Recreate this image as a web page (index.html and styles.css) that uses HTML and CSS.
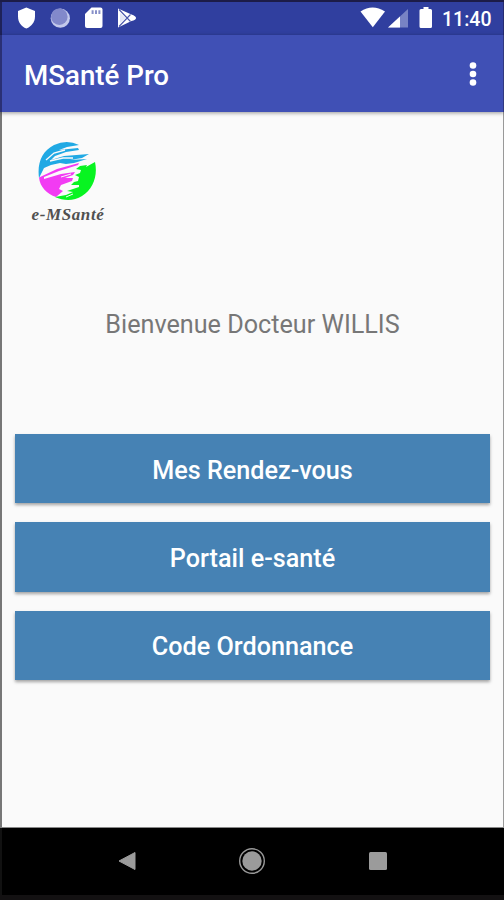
FILE: index.html
```html
<!DOCTYPE html>
<html lang="fr">
<head>
<meta charset="utf-8">
<title>MSanté Pro</title>
<link rel="stylesheet" href="styles.css">
</head>
<body>
<div class="phone">
  <header class="status">
    <svg class="status-left" width="115" height="34" viewBox="0 0 115 34">
      <path fill="#fff" d="M26.300 7.500 35 11V16.500C35 22 31.500 26.500 26.300 28.500C21 26.500 18 22 18 16.500V11Z"/>
      <circle cx="60.300" cy="18.200" r="9.600" fill="#c3c9ec"/>
      <circle cx="59.300" cy="16.700" r="8.300" fill="#8289cb"/>
      <path fill="#fff" d="M91.500 7.500H100.500Q102.500 7.500 102.500 9.500V26Q102.500 28 100.500 28H87Q85 28 85 26V14Z"/>
      <path stroke="#8790c9" stroke-width="2" d="M92.600 10.300V14M96 10.300V14M99.400 10.300V14"/>
    </svg>
    <svg class="play" width="20" height="20" viewBox="0 0 20 20">
      <path fill="#fff" d="M1 .5 14.500 6.500Q19 8 19 10Q19 12 14.500 13L1 19.500Z"/>
      <path fill="none" stroke="#4a57ac" stroke-width="1.100" d="M2 1.500 13.500 13.500M2 18.500 13.500 6.500"/>
      <path fill="#e4e7f6" d="M3 5 8.500 10 3 15Z"/>
    </svg>
    <svg class="status-right" width="80" height="34" viewBox="0 0 80 34">
      <path fill="#fff" d="M.5 11.500Q12.500 3.500 25 11.500L12.800 27.300Z"/>
      <path fill="#7883c4" d="M48 9V27.500H28Z"/>
      <path fill="#fff" d="M40 16.500V27.500H28Z"/>
      <path fill="#fff" d="M63.500 7H68.500V9H70.500Q72 9 72 10.500V26.500Q72 28 70.500 28H61Q59.500 28 59.500 26.500V10.500Q59.500 9 61 9H63.500Z"/>
    </svg>
    <span class="clock">11:40</span>
  </header>
  <div class="appbar">
    <h1>MSanté Pro</h1>
    <svg width="8" height="26" viewBox="0 0 8 26" fill="#fff"><circle cx="4" cy="4.500" r="3.300"/><circle cx="4" cy="13" r="3.300"/><circle cx="4" cy="21.500" r="3.300"/></svg>
  </div>
  <main>
    <div class="logo">
      <svg width="60" height="60" viewBox="0 0 60 60">
        <path fill="#20a9e4" d="M2 37C0 22 5 10 17 4Q30-2 42 4L30 6 22 9 41 7 42 9 29 11 18 15 14 19 27 15 52 13 45 17 33 19 50 18 37 22 29 23 23 22 14 24 7 27Z"/>
        <path stroke="#fafafa" stroke-width="1.300" fill="none" d="M9 19 17 12 28 9M13 20 26 17 36 17"/>
        <path fill="#f23bf3" d="M2 36.500 20 28 42 22 41 24 22 30 7 36 7 38 24 33 38 31 36 34 28 37 36 37 35 40 24 44 22 48 26 50 19 56C10 53 3 46 2 36.500Z"/>
        <path stroke="#fafafa" stroke-width="1" fill="none" d="M24 36 34 33"/>
        <path fill="#08f421" d="M58 21C61 35 56 48 45 55C37 60 27 60 18 56L29 54 36 51 30 50 42 46 42 44 34 44 37 41 41 40 42 36 38 34 43 32 44 29 39 28 43 25 50 24 49 26Z"/>
        <path stroke="#fafafa" stroke-width="1" fill="none" d="M29 56 36 53"/>
      </svg>
      <span class="logo-text">e-MSanté</span>
    </div>
    <p class="welcome">Bienvenue Docteur WILLIS</p>
    <div class="actions">
      <button>Mes Rendez-vous</button>
      <button>Portail e-santé</button>
      <button>Code Ordonnance</button>
    </div>
  </main>
  <nav>
    <svg width="28" height="28" viewBox="0 0 28 28"><path fill="#9b9b9b" stroke="#9b9b9b" stroke-linejoin="round" d="M6 14 22 5.500V22.500Z"/></svg>
    <svg width="28" height="28" viewBox="0 0 28 28"><circle cx="14" cy="14" r="12.300" fill="none" stroke="#999" stroke-width="1.400"/><circle cx="14" cy="14" r="9.700" fill="#9b9b9b"/></svg>
    <svg width="28" height="28" viewBox="0 0 28 28"><rect x="5" y="5" width="18" height="18" rx="1.500" fill="#9b9b9b"/></svg>
  </nav>
</div>
</body>
</html>
```
FILE: styles.css
```css
* { box-sizing: border-box; }
body { margin: 0; background: #111; font-family: Roboto, "Liberation Sans", sans-serif; }
.phone {
  width: 504px;
  height: 900px;
  display: flex;
  flex-direction: column;
  border-top: 2px solid #1c1c48;
  border-bottom: 5px solid #131112;
  background: #fafafa;
}
.status {
  height: 33px;
  display: flex;
  align-items: flex-start;
  background: #303f9f;
  border-left: 2px solid #1e2259;
  border-right: 1px solid #252b70;
}
.status svg { flex: none; }
.status-left { margin: -2px 0 0 -2px; }
.play { margin: 6px 0 0 2px; }
.status-right { margin: -2px 0 0 223px; }
.clock { margin-left: 2px; color: #fff; font-size: 19.5px; font-weight: 500; line-height: 35px; white-space: nowrap; }
.appbar {
  height: 77px;
  flex: none;
  display: flex;
  align-items: center;
  justify-content: space-between;
  padding: 0 26px 0 22px;
  background: #4050b5;
  border-left: 2px solid #2a3075;
  border-right: 1px solid #30387f;
  box-shadow: 0 1px 4px rgba(0, 0, 0, .4);
  z-index: 1;
}
h1 { margin: 4px 0 0; color: #fff; font-size: 27.7px; line-height: 32px; font-weight: 500; }
.appbar svg { margin-top: 1px; }
main {
  flex: 1;
  border-left: 2px solid #777;
  border-right: 1px solid #999;
  border-bottom: 1px solid #888;
}
.logo { width: 76px; margin: 29px 0 0 28px; height: 86px; display: flex; flex-direction: column; align-items: center; }
.logo > svg { flex: none; margin-left: -3px; }
.logo-text { margin-top: 4px; color: #505050; font: italic bold 17px/20px "Liberation Serif", serif; letter-spacing: .6px; white-space: nowrap; }
.welcome { margin: 81px 0 0; text-align: center; color: #777; font-size: 25.2px; line-height: 34px; }
.actions { margin: 92px 13px 0; display: grid; gap: 19px; }
button {
  height: 69.4px;
  border: 0;
  padding: 4px 0 0;
  background: #4682b4;
  color: #fff;
  font: 500 25.2px/30px Roboto, sans-serif;
  box-shadow: 0 2px 3px rgba(0, 0, 0, .35);
}
nav { height: 67px; flex: none; display: flex; justify-content: center; align-items: center; gap: 97.500px; background: #000; border-left: 2px solid #111; padding: 0 2px 2px 0; }
```
